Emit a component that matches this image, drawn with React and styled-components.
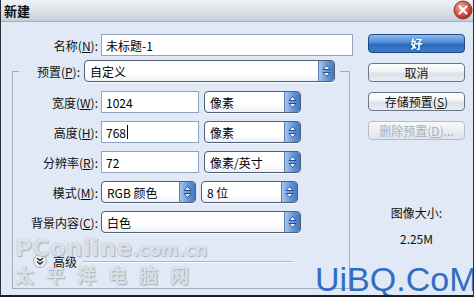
import React from 'react';
import styled, { createGlobalStyle } from 'styled-components';

const GlobalStyle = createGlobalStyle`
  html, body {
    margin: 0;
    padding: 0;
    background: #ffffff;
  }
  body {
    font-family: "Liberation Sans", "Noto Sans CJK SC", sans-serif;
    font-size: 12px;
    color: #000;
  }
`;

const Window = styled.div`
  position: relative;
  width: 474px;
  height: 297px;
  box-sizing: border-box;
  overflow: hidden;
  display: flex;
  flex-direction: column;
  background: #e0e9f5;
  border-left: 1px solid #2a2f38;
  border-right: 1px solid #2a2f38;
  border-bottom: 2px solid #1c2028;
`;

const TitleBar = styled.div`
  height: 22px;
  box-sizing: border-box;
  display: flex;
  align-items: center;
  justify-content: space-between;
  padding-left: 3px;
  background: linear-gradient(#eef1f5, #dde2e9 55%, #c6cdd8);
  border-bottom: 1px solid #a4aebd;
`;

const Title = styled.div`
  font-family: "Noto Sans CJK SC", sans-serif;
  font-weight: bold;
  font-size: 13px;
  color: #101010;
`;

const CloseWrap = styled.div`
  display: flex;
  margin-top: -2px;
`;

const Body = styled.div`
  flex: 1;
  display: flex;
  padding-top: 12px;
`;

const LeftCol = styled.div`
  width: 354px;
  display: flex;
  flex-direction: column;
`;

const RightCol = styled.div`
  flex: 1;
  display: flex;
  flex-direction: column;
  padding-left: 13px;
`;

const Row = styled.div`
  display: flex;
  align-items: center;
  gap: 3px;
  height: 22px;
  margin-bottom: ${p => p.$mb || 0}px;
`;

const Field = styled.div`
  display: flex;
  gap: 5px;
`;

const Label = styled.label`
  width: ${p => p.$w}px;
  text-align: right;
  font-family: "Noto Sans CJK SC", sans-serif;
  font-size: 12px;
  white-space: nowrap;
  color: #111;
`;

const TextBox = styled.div`
  width: ${p => p.$w}px;
  height: 22px;
  box-sizing: border-box;
  border: 1px solid #8ea4c0;
  background: #fff;
  padding-left: 4px;
  display: flex;
  align-items: center;
  font-family: "Noto Sans CJK SC", sans-serif;
  font-size: 12px;
`;

const Caret = styled.span`
  display: inline-block;
  width: 1px;
  height: 14px;
  background: #000;
  margin-left: 1px;
`;

const ComboBox = styled.div`
  width: ${p => p.$w}px;
  height: 22px;
  box-sizing: border-box;
  display: flex;
  border: 1px solid #4f5f76;
  border-radius: 4px;
  overflow: hidden;
  background: linear-gradient(#ffffff, #ffffff 65%, #edf1f6);
  box-shadow: 0 1px 0 #f7fbff;
`;

const ComboValue = styled.div`
  flex: 1;
  display: flex;
  align-items: center;
  padding-left: 5px;
  font-family: "Noto Sans CJK SC", sans-serif;
  font-size: 12px;
  white-space: nowrap;
`;

const ArrowButton = styled.div`
  width: 15px;
  display: flex;
  align-items: center;
  justify-content: center;
  background: linear-gradient(to right, #a6c6ee, #5f93d6 60%, #4378c2);
  border-left: 1px solid #5a7fb3;
`;

const GroupBox = styled.fieldset`
  margin: 0 0 0 11px;
  padding: 9px 0 19px 0;
  width: 338px;
  box-sizing: border-box;
  min-inline-size: 0;
  border: 1px solid #9eacbf;
  display: flex;
  flex-direction: column;
  gap: 8px;
`;

const Legend = styled.legend`
  margin-left: 6px;
  padding: 0 5px 0 0;
  display: flex;
  align-items: center;
  gap: 4px;
  height: 22px;
`;

const AdvancedRow = styled.div`
  display: flex;
  align-items: center;
  height: 16px;
  margin-top: 12px;
  margin-right: 56px;
  padding-left: 20px;
  gap: 6px;
`;

const ExpandIcon = styled.div`
  width: 14px;
  height: 14px;
  border-radius: 50%;
  box-sizing: border-box;
  border: 1px solid #aab2bd;
  background: radial-gradient(circle at 40% 35%, #ffffff, #e6e9ee 70%, #c9ced6);
  display: flex;
  align-items: center;
  justify-content: center;
`;

const AdvancedText = styled.span`
  font-family: "Noto Sans CJK SC", sans-serif;
  font-size: 12px;
  color: #111;
`;

const Separator = styled.div`
  flex: 1;
  height: 1px;
  background: #a9b8ca;
  box-shadow: 0 1px 0 #f6f9fd;
`;

const Button = styled.div`
  width: 97px;
  height: 19px;
  box-sizing: border-box;
  margin-bottom: 10px;
  border-radius: 4px;
  display: flex;
  align-items: center;
  justify-content: center;
  font-family: "Noto Sans CJK SC", sans-serif;
  font-size: 12px;
  border: 1px solid ${p => (p.$variant === 'primary' ? '#1d4a8a' : p.$variant === 'disabled' ? '#b4bdc9' : '#69768a')};
  color: ${p => (p.$variant === 'primary' ? '#ffffff' : p.$variant === 'disabled' ? '#a9b1bc' : '#111')};
  font-weight: ${p => (p.$variant === 'primary' ? 'bold' : 'normal')};
  background: ${p =>
    p.$variant === 'primary'
      ? 'linear-gradient(#8dbcf0, #4f8ad6 45%, #2f69bb 55%, #3c78c8)'
      : p.$variant === 'disabled'
      ? 'linear-gradient(#f7f9fb, #e9edf2 55%, #dfe4ea)'
      : 'linear-gradient(#ffffff, #f1f3f6 45%, #dde2e9 55%, #e8ecf1)'};
  text-shadow: ${p => (p.$variant === 'primary' ? '0 0 2px #17407a' : 'none')};
`;

const Info = styled.div`
  width: 97px;
  margin-top: 54px;
  display: flex;
  flex-direction: column;
  align-items: center;
  gap: 9px;
  font-family: "Noto Sans CJK SC", sans-serif;
  font-size: 12px;
  color: #111;
`;

const WatermarkPC = styled.div`
  position: absolute;
  left: 14px;
  top: 235px;
  pointer-events: none;
  font-family: "DejaVu Sans", sans-serif;
  font-weight: bold;
  font-size: 23px;
  letter-spacing: 0.5px;
  color: rgba(255, 255, 255, 0.72);
  text-shadow: 0 0 1px rgba(80, 100, 125, 0.55), 1px 1px 1px rgba(110, 130, 150, 0.45);
  span {
    font-size: 17px;
    letter-spacing: 0;
  }
`;

const WatermarkCN = styled.div`
  position: absolute;
  left: 14px;
  top: 261px;
  pointer-events: none;
  font-family: "Noto Sans CJK SC", sans-serif;
  font-weight: bold;
  font-size: 19px;
  letter-spacing: 12px;
  color: rgba(255, 255, 255, 0.72);
  text-shadow: 0 0 1px rgba(80, 100, 125, 0.55), 1px 1px 1px rgba(110, 130, 150, 0.45);
`;

const WatermarkUiBQ = styled.div`
  position: absolute;
  left: 314px;
  top: 264px;
  pointer-events: none;
  font-family: "Liberation Sans", sans-serif;
  font-size: 34px;
  line-height: 30px;
  color: #2f6fc2;
`;

const ArrowIcon = () => (
  <svg width="11" height="16" viewBox="0 0 11 16">
    <path d="M2 6.5 L5.5 2.5 L9 6.5 Z" fill="#f4f8fd" stroke="#23508f" strokeWidth="1" strokeLinejoin="round" />
    <path d="M2 9.5 L5.5 13.5 L9 9.5 Z" fill="#f4f8fd" stroke="#23508f" strokeWidth="1" strokeLinejoin="round" />
  </svg>
);

const Combo = ({ width, children }) => (
  <ComboBox $w={width}>
    <ComboValue>{children}</ComboValue>
    <ArrowButton>
      <ArrowIcon />
    </ArrowButton>
  </ComboBox>
);

const CloseIcon = () => (
  <svg width="20" height="20" viewBox="0 0 20 20">
    <defs>
      <radialGradient id="cg" cx="40%" cy="35%" r="65%">
        <stop offset="0%" stopColor="#f3b3aa" />
        <stop offset="55%" stopColor="#d95e52" />
        <stop offset="100%" stopColor="#a6281f" />
      </radialGradient>
    </defs>
    <circle cx="10" cy="10" r="9" fill="url(#cg)" stroke="#8a3b36" strokeWidth="1" />
    <path d="M6.5 6.5 L13.5 13.5 M13.5 6.5 L6.5 13.5" stroke="#ffffff" strokeWidth="2.2" strokeLinecap="round" />
  </svg>
);

const ChevronIcon = () => (
  <svg width="8" height="8" viewBox="0 0 8 8">
    <path d="M1 1 L4 3.5 L7 1 M1 4.5 L4 7 L7 4.5" fill="none" stroke="#222" strokeWidth="1.4" />
  </svg>
);

const FieldRow = ({ label, children }) => (
  <Row>
    <Label $w={85}>{label}</Label>
    <Field>{children}</Field>
  </Row>
);

const App = () => {
  return (
    <>
      <GlobalStyle />
      <Window>
        <TitleBar>
          <Title>新建</Title>
          <CloseWrap>
            <CloseIcon />
          </CloseWrap>
        </TitleBar>
        <Body>
          <LeftCol>
            <Row $mb={4}>
              <Label $w={97}>名称(<u>N</u>):</Label>
              <TextBox $w={252}>未标题-1</TextBox>
            </Row>
            <GroupBox>
              <Legend>
                <Label $w={61}>预置(<u>P</u>):</Label>
                <Combo width={251}>自定义</Combo>
              </Legend>
              <FieldRow label={<>宽度(<u>W</u>):</>}>
                <TextBox $w={98}>1024</TextBox>
                <Combo width={97}>像素</Combo>
              </FieldRow>
              <FieldRow label={<>高度(<u>H</u>):</>}>
                <TextBox $w={98}>768<Caret /></TextBox>
                <Combo width={97}>像素</Combo>
              </FieldRow>
              <FieldRow label={<>分辨率(<u>R</u>):</>}>
                <TextBox $w={98}>72</TextBox>
                <Combo width={97}>像素/英寸</Combo>
              </FieldRow>
              <FieldRow label={<>模式(<u>M</u>):</>}>
                <Combo width={95}>RGB 颜色</Combo>
                <Combo width={97}>8 位</Combo>
              </FieldRow>
              <FieldRow label={<>背景内容(<u>C</u>):</>}>
                <Combo width={200}>白色</Combo>
              </FieldRow>
              <AdvancedRow>
                <ExpandIcon>
                  <ChevronIcon />
                </ExpandIcon>
                <AdvancedText>高级</AdvancedText>
                <Separator />
              </AdvancedRow>
            </GroupBox>
          </LeftCol>
          <RightCol>
            <Button $variant="primary">好</Button>
            <Button>取消</Button>
            <Button>存储预置(<u>S</u>)</Button>
            <Button $variant="disabled">删除预置(<u>D</u>)...</Button>
            <Info>
              <span>图像大小:</span>
              <span>2.25M</span>
            </Info>
          </RightCol>
        </Body>
        <WatermarkPC>
          PConline<span>.com.cn</span>
        </WatermarkPC>
        <WatermarkCN>太平洋电脑网</WatermarkCN>
        <WatermarkUiBQ>UiBQ.CoM</WatermarkUiBQ>
      </Window>
    </>
  );
};

export default App;
